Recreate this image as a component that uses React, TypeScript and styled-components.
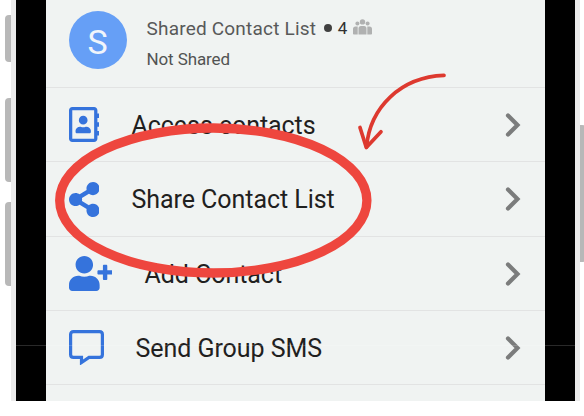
import styled, { createGlobalStyle } from "styled-components";
import { FaRegAddressBook, FaShareAlt, FaUserPlus } from "react-icons/fa";

const GlobalStyle = createGlobalStyle`
  * {
    box-sizing: border-box;
  }
  body {
    margin: 0;
    background: #ffffff;
    font-family: Roboto, "Liberation Sans", sans-serif;
  }
`;

const Page = styled.main`
  position: relative;
  width: 584px;
  height: 416px;
  display: flex;
  align-items: flex-start;
  overflow: hidden;
`;

const SideButtons = styled.div<{ $width: number; $top: number }>`
  width: ${(p) => p.$width}px;
  padding-top: ${(p) => p.$top}px;
  display: flex;
  flex-direction: column;
  align-items: flex-end;
  flex-shrink: 0;
`;

const SideButton = styled.div<{ $height: number; $gap?: number; $right?: boolean }>`
  width: 6.5px;
  height: ${(p) => p.$height}px;
  margin-bottom: ${(p) => p.$gap || 0}px;
  background: #b8b8b8;
  border-radius: ${(p) => (p.$right ? "0 4px 4px 0" : "4px 0 0 4px")};
`;

const Phone = styled.div`
  position: relative;
  width: 568.5px;
  height: 400.5px;
  display: flex;
  flex-shrink: 0;
  border: solid #ebebeb;
  border-width: 0 5px;
`;

const Bezel = styled.div`
  width: 29.5px;
  background: #000000;
  flex-shrink: 0;
`;

const Seam = styled.div`
  position: absolute;
  left: 0;
  right: 0;
  top: 345px;
  height: 1px;
  background: rgba(255, 255, 255, 0.16);
`;

const Screen = styled.div`
  flex: 1;
  background: #f0f3f2;
`;

const Header = styled.header`
  height: 88px;
  display: flex;
  padding-left: 23px;
  border-bottom: 1px solid #e2e3e3;
`;

const Avatar = styled.div`
  width: 58px;
  height: 58px;
  margin-top: 11px;
  border-radius: 50%;
  background: #669ff6;
  color: #f1f5fb;
  font-size: 34px;
  line-height: 62px;
  text-align: center;
`;

const HeaderText = styled.div`
  padding: 16px 0 0 20px;
`;

const Title = styled.div`
  display: flex;
  align-items: center;
  height: 24px;
  color: #585959;
  font-size: 19px;
  letter-spacing: 0.2px;

  svg {
    margin-bottom: 2px;
  }
`;

const Dot = styled.span`
  width: 8px;
  height: 8px;
  margin: 0 6px 0 7.5px;
  border-radius: 50%;
  background: #404040;
`;

const Count = styled.span`
  color: #303030;
  font-size: 17px;
  margin-right: 6px;
`;

const Subtitle = styled.div`
  margin-top: 7px;
  color: #525353;
  font-size: 17px;
  line-height: 24px;
  letter-spacing: -0.1px;
`;

const Row = styled.div<{ $height: number }>`
  height: ${(p) => p.$height}px;
  display: flex;
  align-items: center;
  padding: 0 24px 0 23px;
  border-bottom: 1px solid #e2e3e3;
`;

const RowIcon = styled.div<{ $space: number; $width: number }>`
  width: ${(p) => p.$space}px;
  display: flex;
  flex-shrink: 0;
  color: #3573dc;

  svg {
    width: ${(p) => p.$width}px;
    height: 35px;
  }
`;

const Label = styled.span`
  flex: 1;
  padding-top: 1px;
  color: #1f2020;
  font-size: 25px;
  letter-spacing: -0.05px;
  white-space: nowrap;
`;

const Annotation = styled.svg`
  position: absolute;
  top: 0;
  left: 0;
`;

const GroupIcon = () => (
  <svg width="19" height="16" viewBox="0 0 19 16" fill="#b0b1b1">
    <circle cx="9.5" cy="2.9" r="2.7" />
    <circle cx="4.4" cy="4.6" r="2" />
    <circle cx="14.6" cy="4.6" r="2" />
    <path d="M5.5 15.5V9.5q0-2.5 2.5-2.5h3q2.5 0 2.5 2.5v6z" />
    <path d="M0 15V10q0-2.5 2.5-2.5h2.2v8h-4zM19 15V10q0-2.5-2.5-2.5h-2.2v8h4z" />
  </svg>
);

const ChatIcon = () => (
  <svg viewBox="0 0 35 35" fill="none" stroke="currentColor" strokeWidth="3.2">
    <path d="M4.5 1.7H30.5Q33.4 1.7 33.4 4.6V24.5Q33.4 27.4 30.5 27.4H20L12.5 32.5V27.4H4.5Q1.6 27.4 1.6 24.5V4.6Q1.6 1.7 4.5 1.7Z" />
  </svg>
);

const Chevron = () => (
  <svg width="16" height="26" viewBox="0 0 16 26" fill="none">
    <path d="M3 3.5L12.5 13L3 22.5" stroke="#7b7c7c" strokeWidth="4.2" strokeLinecap="round" />
  </svg>
);

const rows = [
  { label: "Access contacts", icon: <FaRegAddressBook />, space: 63, width: 30.6, height: 74 },
  { label: "Share Contact List", icon: <FaShareAlt />, space: 63, width: 30.6, height: 75 },
  { label: "Add Contact", icon: <FaUserPlus />, space: 76, width: 43.75, height: 74 },
  { label: "Send Group SMS", icon: <ChatIcon />, space: 67, width: 35, height: 74 },
];

const App = () => {
  return (
    <Page>
      <GlobalStyle />
      <SideButtons $width={11} $top={15}>
        <SideButton $height={47} $gap={36} />
        <SideButton $height={84} $gap={19.5} />
        <SideButton $height={84.5} />
      </SideButtons>
      <Phone>
        <Bezel />
        <Screen>
          <Header>
            <Avatar>S</Avatar>
            <HeaderText>
              <Title>
                Shared Contact List
                <Dot />
                <Count>4</Count>
                <GroupIcon />
              </Title>
              <Subtitle>Not Shared</Subtitle>
            </HeaderText>
          </Header>
          {rows.map((row) => (
            <Row key={row.label} $height={row.height}>
              <RowIcon $space={row.space} $width={row.width}>
                {row.icon}
              </RowIcon>
              <Label>{row.label}</Label>
              <Chevron />
            </Row>
          ))}
        </Screen>
        <Bezel />
        <Seam />
      </Phone>
      <SideButtons $width={6.5} $top={125}>
        <SideButton $height={137} $right />
      </SideButtons>

      {/* hand drawn circle and arrow */}
      <Annotation width="584" height="416" fill="none">
        <ellipse cx="213.3" cy="200.5" rx="153.6" ry="72.5" stroke="#ee463e" strokeWidth="9.3" />
        <g stroke="#dd392f" strokeWidth="3.7" strokeLinecap="round" strokeLinejoin="round">
          <path d="M444 75.4C401 77 370 107 366.5 147" />
          <path d="M360 127.5L366.3 147.5L381 131.8" />
        </g>
      </Annotation>
    </Page>
  );
};

export default App;
